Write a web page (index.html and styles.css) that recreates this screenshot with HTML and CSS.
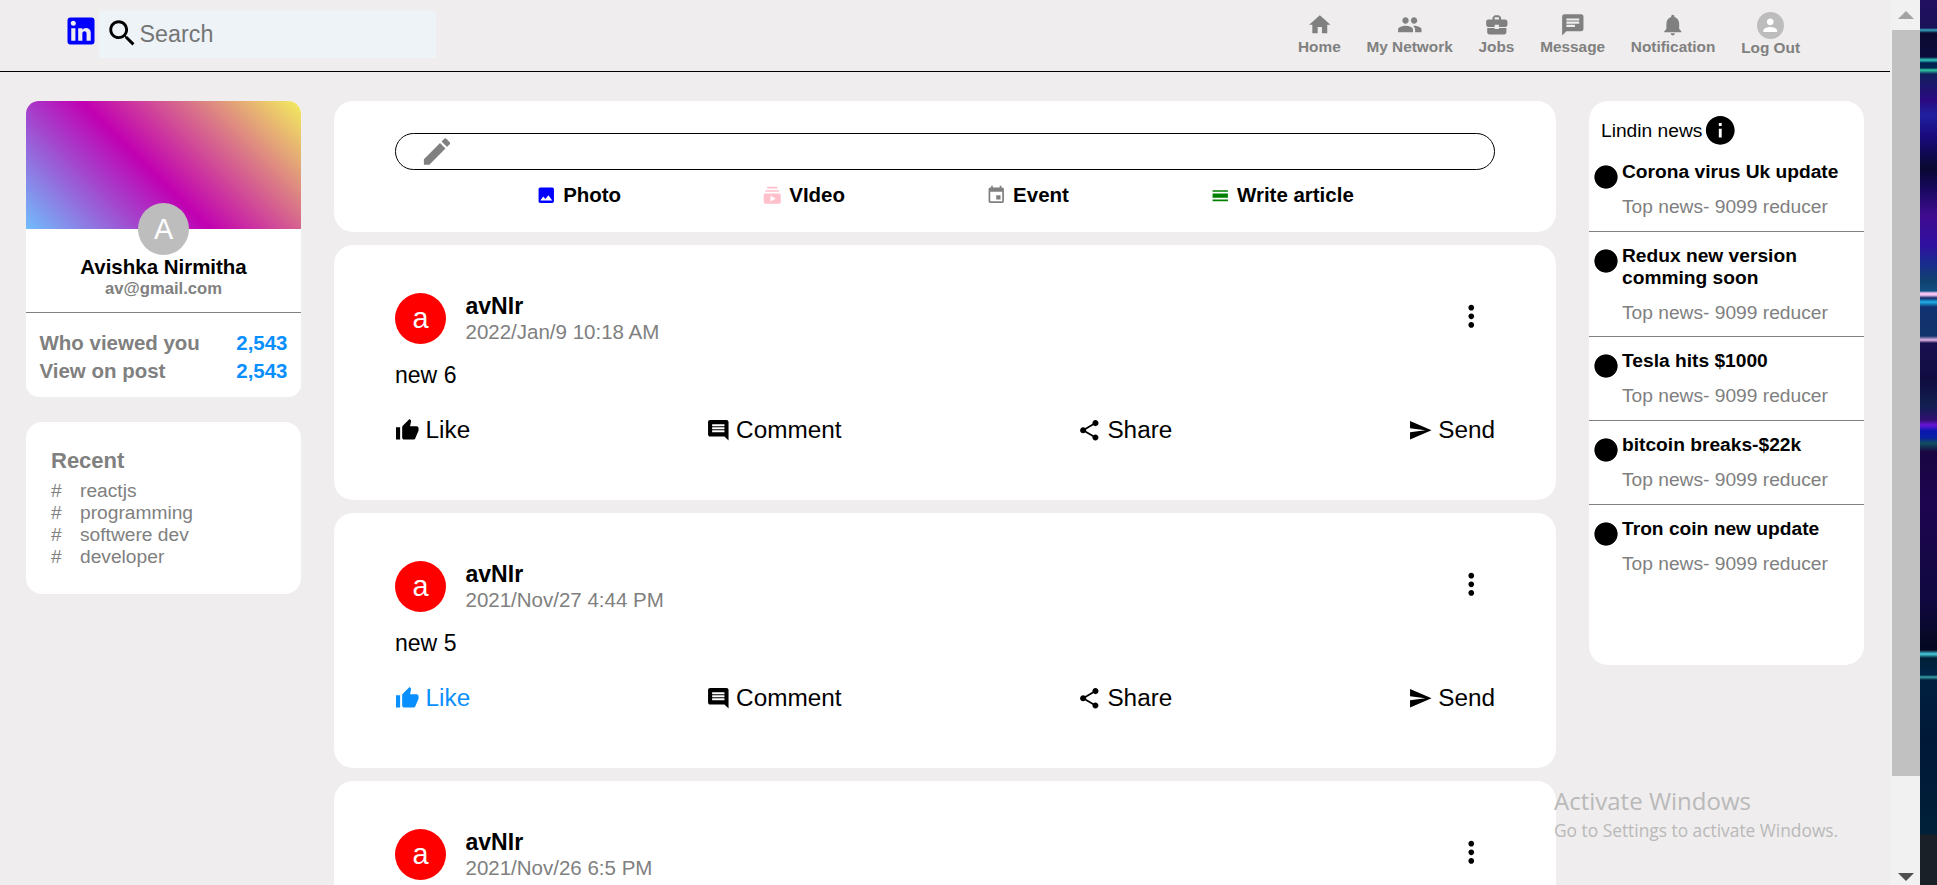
FILE: index.html
```html
<!DOCTYPE html>
<html lang="en">
<head>
<meta charset="utf-8">
<title>Lindin</title>
<link rel="stylesheet" href="styles.css">
</head>
<body>
<svg class="sprite" aria-hidden="true">
  <symbol id="linkedin" viewBox="0 0 24 24"><path d="M19 3a2 2 0 0 1 2 2v14a2 2 0 0 1-2 2H5a2 2 0 0 1-2-2V5a2 2 0 0 1 2-2h14m-.5 15.5v-5.3a3.26 3.26 0 0 0-3.26-3.26c-.85 0-1.84.52-2.32 1.3v-1.11h-2.79v8.37h2.79v-4.93c0-.77.62-1.4 1.39-1.4a1.4 1.4 0 0 1 1.4 1.4v4.93h2.79M6.88 8.56a1.68 1.68 0 0 0 1.68-1.68c0-.93-.75-1.69-1.68-1.69a1.69 1.69 0 0 0-1.69 1.69c0 .93.76 1.68 1.69 1.68m1.39 9.94v-8.37H5.5v8.37h2.77z"/></symbol>
  <symbol id="search" viewBox="0 0 24 24"><path d="M15.5 14h-.79l-.28-.27C15.41 12.59 16 11.11 16 9.5 16 5.91 13.09 3 9.5 3S3 5.91 3 9.5 5.91 16 9.5 16c1.61 0 3.09-.59 4.23-1.57l.27.28v.79l5 4.99L20.49 19l-4.99-5zm-6 0C7.01 14 5 11.99 5 9.5S7.01 5 9.5 5 14 7.01 14 9.5 11.99 14 9.5 14z"/></symbol>
  <symbol id="home" viewBox="0 0 24 24"><path d="M10 20v-6h4v6h5v-8h3L12 3 2 12h3v8z"/></symbol>
  <symbol id="people" viewBox="0 0 24 24"><path d="M16 11c1.66 0 2.99-1.34 2.99-3S17.66 5 16 5c-1.66 0-3 1.34-3 3s1.34 3 3 3zm-8 0c1.66 0 2.99-1.34 2.99-3S9.66 5 8 5C6.34 5 5 6.34 5 8s1.34 3 3 3zm0 2c-2.33 0-7 1.17-7 3.5V19h14v-2.5c0-2.33-4.67-3.5-7-3.5zm8 0c-.29 0-.62.02-.97.05 1.16.84 1.97 1.97 1.97 3.45V19h6v-2.5c0-2.33-4.67-3.5-7-3.5z"/></symbol>
  <symbol id="jobs" viewBox="0 0 24 24"><path d="M10 16v-1H3.01L3 19c0 1.11.89 2 2 2h14c1.11 0 2-.89 2-2v-4h-7v1h-4zm10-9h-4.01V5l-2-2h-4l-2 2v2H4c-1.1 0-2 .9-2 2v3c0 1.11.89 2 2 2h6v-2h4v2h6c1.1 0 2-.9 2-2V9c0-1.1-.9-2-2-2zm-6 0h-4V5h4v2z"/></symbol>
  <symbol id="message" viewBox="0 0 24 24"><path d="M20 2H4c-1.1 0-1.99.9-1.99 2L2 22l4-4h14c1.1 0 2-.9 2-2V4c0-1.1-.9-2-2-2zm-6 12H6v-2h8v2zm4-3H6V9h12v2zm0-3H6V6h12v2z"/></symbol>
  <symbol id="bell" viewBox="0 0 24 24"><path d="M12 22c1.1 0 2-.9 2-2h-4c0 1.1.89 2 2 2zm6-6v-5c0-3.07-1.64-5.64-4.5-6.32V4c0-.83-.67-1.5-1.5-1.5s-1.5.67-1.5 1.5v.68C7.63 5.36 6 7.92 6 11v5l-2 2v1h16v-1l-2-2z"/></symbol>
  <symbol id="person" viewBox="0 0 24 24"><path d="M12 12c2.21 0 4-1.79 4-4s-1.79-4-4-4-4 1.79-4 4 1.79 4 4 4zm0 2c-2.67 0-8 1.34-8 4v2h16v-2c0-2.66-5.33-4-8-4z"/></symbol>
  <symbol id="edit" viewBox="0 0 24 24"><path d="M3 17.25V21h3.75L17.81 9.94l-3.75-3.75L3 17.25zM20.71 7.04c.39-.39.39-1.02 0-1.41l-2.34-2.34a.9959.9959 0 0 0-1.41 0l-1.83 1.83 3.75 3.75 1.83-1.83z"/></symbol>
  <symbol id="photo" viewBox="0 0 24 24"><path d="M21 19V5c0-1.1-.9-2-2-2H5c-1.1 0-2 .9-2 2v14c0 1.1.9 2 2 2h14c1.1 0 2-.9 2-2zM8.5 13.5l2.5 3.01L14.5 12l4.5 6H5l3.5-4.5z"/></symbol>
  <symbol id="video" viewBox="0 0 24 24"><path d="M20 8H4V6h16v2zm-2-6H6v2h12V2zm4 10v8c0 1.1-.9 2-2 2H4c-1.1 0-2-.9-2-2v-8c0-1.1.9-2 2-2h16c1.1 0 2 .9 2 2zm-6 4l-6-3.27v6.53L16 16z"/></symbol>
  <symbol id="event" viewBox="0 0 24 24"><path d="M17 12h-5v5h5v-5zM16 1v2H8V1H6v2H5c-1.11 0-1.99.9-1.99 2L3 19c0 1.1.89 2 2 2h14c1.1 0 2-.9 2-2V5c0-1.1-.9-2-2-2h-1V1h-2zm3 18H5V8h14v11z"/></symbol>
  <symbol id="article" viewBox="0 0 24 24"><path d="M3 17h18v2H3zM3 10h18v5H3zM3 6h18v2H3z"/></symbol>
  <symbol id="more" viewBox="0 0 24 24"><path d="M12 8c1.1 0 2-.9 2-2s-.9-2-2-2-2 .9-2 2 .9 2 2 2zm0 2c-1.1 0-2 .9-2 2s.9 2 2 2 2-.9 2-2-.9-2-2-2zm0 6c-1.1 0-2 .9-2 2s.9 2 2 2 2-.9 2-2-.9-2-2-2z"/></symbol>
  <symbol id="like" viewBox="0 0 24 24"><path d="M1 21h4V9H1v12zm22-11c0-1.100-.9-2-2-2h-6.310l.95-4.570.03-.32c0-.41-.17-.79-.44-1.060L14.170 1 7.590 7.590C7.220 7.950 7 8.450 7 9v10c0 1.100.9 2 2 2h9c.83 0 1.540-.5 1.840-1.220l3.020-7.050c.09-.23.14-.47.14-.73v-2z"/></symbol>
  <symbol id="comment" viewBox="0 0 24 24"><path d="M21.990 4c0-1.100-.89-2-1.990-2H4c-1.100 0-2 .9-2 2v12c0 1.100.9 2 2 2h14l4 4-.01-18zM18 14H6v-2h12v2zm0-3H6V9h12v2zm0-3H6V6h12v2z"/></symbol>
  <symbol id="share" viewBox="0 0 24 24"><path d="M18 16.080c-.76 0-1.440.3-1.960.77L8.910 12.700c.05-.23.09-.46.09-.7s-.04-.47-.09-.7l7.050-4.110c.54.5 1.250.81 2.040.81 1.660 0 3-1.340 3-3s-1.340-3-3-3-3 1.340-3 3c0 .24.04.47.09.7L8.040 9.810C7.500 9.310 6.790 9 6 9c-1.660 0-3 1.340-3 3s1.340 3 3 3c.79 0 1.500-.31 2.040-.81l7.120 4.160c-.05.21-.08.43-.08.65 0 1.610 1.310 2.920 2.920 2.920s2.920-1.310 2.920-2.920-1.310-2.920-2.920-2.920z"/></symbol>
  <symbol id="send" viewBox="0 0 24 24"><path d="M2.010 21L23 12 2.010 3 2 10l15 2-15 2z"/></symbol>
  <symbol id="info" viewBox="0 0 24 24"><path d="M12 2C6.480 2 2 6.480 2 12s4.480 10 10 10 10-4.480 10-10S17.520 2 12 2zm1 15h-2v-6h2v6zm0-8h-2V7h2v2z"/></symbol>
</svg>

<div class="desktop">
  <div class="page">
    <header class="header">
      <svg class="logo"><use href="#linkedin"/></svg>
      <div class="search">
        <svg class="search-icon"><use href="#search"/></svg>
        <span>Search</span>
      </div>
      <nav class="nav">
        <a class="nav-item"><svg><use href="#home"/></svg>Home</a>
        <a class="nav-item"><svg><use href="#people"/></svg>My Network</a>
        <a class="nav-item"><svg><use href="#jobs"/></svg>Jobs</a>
        <a class="nav-item"><svg><use href="#message"/></svg>Message</a>
        <a class="nav-item"><svg><use href="#bell"/></svg>Notification</a>
        <a class="nav-item"><span class="nav-avatar"><svg><use href="#person"/></svg></span>Log Out</a>
      </nav>
    </header>

    <div class="columns">
      <aside class="side">
        <section class="profile">
          <div class="cover"></div>
          <div class="avatar profile-avatar">A</div>
          <h2 class="profile-name">Avishka Nirmitha</h2>
          <p class="profile-mail">av@gmail.com</p>
          <div class="stats">
            <div class="stat"><span>Who viewed you</span><b>2,543</b></div>
            <div class="stat"><span>View on post</span><b>2,543</b></div>
          </div>
        </section>
        <section class="recent">
          <h3>Recent</h3>
          <p><span>#</span>reactjs</p>
          <p><span>#</span>programming</p>
          <p><span>#</span>softwere dev</p>
          <p><span>#</span>developer</p>
        </section>
      </aside>

      <main class="feed">
        <section class="composer">
          <div class="composer-input"><svg><use href="#edit"/></svg></div>
          <div class="composer-options">
            <div class="option"><svg class="blue"><use href="#photo"/></svg>Photo</div>
            <div class="option"><svg class="pink"><use href="#video"/></svg>VIdeo</div>
            <div class="option"><svg class="gray"><use href="#event"/></svg>Event</div>
            <div class="option"><svg class="green"><use href="#article"/></svg>Write article</div>
          </div>
        </section>

        <article class="post">
          <div class="post-head">
            <div class="avatar red">a</div>
            <div class="post-meta"><h4>avNIr</h4><p>2022/Jan/9 10:18 AM</p></div>
            <svg class="more"><use href="#more"/></svg>
          </div>
          <p class="post-body">new 6</p>
          <div class="actions">
            <div class="action"><svg><use href="#like"/></svg>Like</div>
            <div class="action"><svg><use href="#comment"/></svg>Comment</div>
            <div class="action"><svg><use href="#share"/></svg>Share</div>
            <div class="action"><svg><use href="#send"/></svg>Send</div>
          </div>
        </article>

        <article class="post">
          <div class="post-head">
            <div class="avatar red">a</div>
            <div class="post-meta"><h4>avNIr</h4><p>2021/Nov/27 4:44 PM</p></div>
            <svg class="more"><use href="#more"/></svg>
          </div>
          <p class="post-body">new 5</p>
          <div class="actions">
            <div class="action liked"><svg><use href="#like"/></svg>Like</div>
            <div class="action"><svg><use href="#comment"/></svg>Comment</div>
            <div class="action"><svg><use href="#share"/></svg>Share</div>
            <div class="action"><svg><use href="#send"/></svg>Send</div>
          </div>
        </article>

        <article class="post">
          <div class="post-head">
            <div class="avatar red">a</div>
            <div class="post-meta"><h4>avNIr</h4><p>2021/Nov/26 6:5 PM</p></div>
            <svg class="more"><use href="#more"/></svg>
          </div>
        </article>
      </main>

      <aside class="news">
        <div class="news-head">Lindin news<svg><use href="#info"/></svg></div>
        <div class="news-item"><h4>Corona virus Uk update</h4><p>Top news- 9099 reducer</p></div>
        <div class="news-item"><h4>Redux new version comming soon</h4><p>Top news- 9099 reducer</p></div>
        <div class="news-item"><h4>Tesla hits $1000</h4><p>Top news- 9099 reducer</p></div>
        <div class="news-item"><h4>bitcoin breaks-$22k</h4><p>Top news- 9099 reducer</p></div>
        <div class="news-item"><h4>Tron coin new update</h4><p>Top news- 9099 reducer</p></div>
      </aside>
    </div>
  </div>

  <div class="scrollbar">
    <svg class="arrow up" viewBox="0 0 16 8"><path d="M0 8L8 0l8 8z"/></svg>
    <div class="thumb"></div>
    <svg class="arrow down" viewBox="0 0 16 8"><path d="M0 0h16L8 8z"/></svg>
  </div>
  <div class="wallpaper"></div>

  <div class="watermark">
    <p class="watermark-title">Activate Windows</p>
    <p class="watermark-text">Go to Settings to activate Windows.</p>
  </div>
</div>
</body>
</html>
```

FILE: styles.css
```css
* { box-sizing: border-box; margin: 0; padding: 0; }

body {
  font-family: "Liberation Sans", Arial, sans-serif;
  font-size: 19.2px;
  line-height: 22px;
  color: #000;
  overflow: hidden;
}

svg { display: block; flex: none; fill: currentColor; }
.sprite { display: none; }

.desktop {
  position: relative;
  display: grid;
  grid-template-columns: 1890px 30px 17px;
  height: 885px;
  overflow: hidden;
}

.page { height: 885px; overflow: hidden; background: #efeded; }

/* Header */
.header {
  display: flex;
  align-items: flex-start;
  height: 72px;
  padding: 11px 90px 0 63px;
  border-bottom: 1px solid #000;
}
.logo { width: 36px; height: 36px; margin-top: 2px; color: #00f; }
.search {
  display: flex;
  align-items: center;
  width: 337px;
  height: 47px;
  padding: 0 0 2px 5.5px;
  background: #edf3f7;
  color: #757575;
  font-size: 23.3px;
}
.search-icon { width: 34.56px; height: 34.56px; margin-right: .5px; color: #000; }
.nav { display: flex; gap: 25.8px; margin: 1px 0 0 auto; }
.nav-item {
  display: flex;
  flex-direction: column;
  align-items: center;
  color: gray;
  font-size: 15.36px;
  font-weight: bold;
  line-height: 18px;
}
.nav-item svg { width: 25.6px; height: 25.6px; }
.nav-avatar {
  display: flex;
  align-items: center;
  justify-content: center;
  width: 27px;
  height: 27px;
  border-radius: 50%;
  background: #bdbdbd;
  color: #fff;
}
.nav-avatar svg { width: 20.5px; height: 20.5px; }

/* Columns */
.columns {
  display: grid;
  grid-template-columns: 275px 1222px 275px;
  gap: 33px;
  align-items: start;
  padding: 29px 26px 0;
}

.avatar {
  display: flex;
  align-items: center;
  justify-content: center;
  flex: none;
  width: 51px;
  height: 51px;
  border-radius: 50%;
  background: #bdbdbd;
  color: #fff;
  font-size: 28.8px;
  line-height: 1;
}
.red { background: red; }

/* Profile */
.profile {
  height: 296px;
  border-radius: 12.8px;
  background: #fff;
  overflow: hidden;
}
.cover {
  height: 128px;
  background: linear-gradient(45deg, #71bdfc 0%, #c100b2 45.5%, #f3ee5d 100%);
}
.profile-avatar { height: 52px; margin: -26px auto 0; }
.profile-name { font-size: 20.48px; line-height: 24px; text-align: center; }
.profile-mail {
  padding-bottom: 14px;
  color: gray;
  font-size: 16.64px;
  font-weight: bold;
  line-height: 19px;
  text-align: center;
}
.stats { padding: 16px 13.5px 0; border-top: 1px solid gray; color: gray; font-size: 20.48px; font-weight: bold; }
.stat { display: flex; justify-content: space-between; line-height: 28px; }
.stat b { color: #0a8fff; }

.recent {
  height: 172px;
  margin-top: 25px;
  padding: 26px 25px 0;
  border-radius: 16px;
  background: #fff;
  color: gray;
}
.recent h3 { margin-bottom: 6px; font-size: 22px; line-height: 26px; }
.recent p { display: flex; }
.recent span { width: 29px; }

/* Feed */
.feed { display: grid; gap: 13px; }
.composer { height: 131px; padding: 32px 61px 0; border-radius: 19px; background: #fff; }
.composer-input {
  height: 37px;
  padding-left: 22.5px;
  border: 1px solid #000;
  border-radius: 19px;
  color: gray;
}
.composer-input svg { width: 36px; height: 35px; }
.composer-options { display: flex; justify-content: space-evenly; margin-top: 13px; }
.option {
  display: flex;
  align-items: center;
  gap: 6.4px;
  font-size: 20.48px;
  font-weight: bold;
  line-height: 24px;
}
.option svg { width: 20.5px; height: 20.5px; }
.blue { color: #00f; }
.pink { color: pink; }
.gray { color: gray; }
.green { color: green; }

.post { height: 255px; padding: 48px 61px 0; border-radius: 19px; background: #fff; }
.post-head { display: flex; align-items: flex-start; }
.post-meta { flex: 1; margin-left: 19.5px; }
.post-meta h4 { font-size: 23.04px; line-height: 26px; }
.post-meta p { color: gray; font-size: 20.5px; line-height: 25px; }
.more { width: 34.56px; height: 34.56px; margin: 6px 6px 0 0; }
.post-body { margin-top: 18px; font-size: 23.04px; line-height: 26px; }
.actions { display: flex; justify-content: space-between; margin-top: 28px; }
.action { display: flex; align-items: center; gap: 6px; font-size: 24.32px; line-height: 28px; }
.action svg { width: 24.6px; height: 24.6px; }
.liked { color: #0a8fff; }

/* News */
.news { height: 564px; border-radius: 19px; background: #fff; }
.news-head {
  display: flex;
  align-items: center;
  height: 47px;
  padding: 12px 0 0 12px;
}
.news-head svg { width: 34.56px; height: 34.56px; margin-left: 1px; }
.news-item {
  display: grid;
  gap: 13px;
  padding: 13px 20px 12.7px 33px;
  border-bottom: 1px solid gray;
  background: radial-gradient(circle 12px at 17px 29px, #000 11.2px, transparent 12px);
}
.news-item:last-child { border-bottom: 0; }
.news-item h4 { font-size: 19.2px; }
.news-item p { color: gray; }

/* Scroll bar and desktop edge */
.scrollbar {
  display: flex;
  flex-direction: column;
  align-items: center;
  padding: 11px 0 4px 2px;
  background: #f1f1f1;
}
.arrow { width: 16px; height: 8px; }
.up { color: #a3a3a3; }
.thumb { width: 28px; height: 746px; margin-top: 11px; background: #c1c1c1; }
.down { margin-top: auto; color: #505050; }

.wallpaper {
  background: linear-gradient(
    #221060 0, #1a1258 28px, #35a8c0 30px, #0a0a30 33px, #0c0c3c 57px,
    #30d0c0 60px, #002050 63px, #002850 68px, #30d0a8 70px, #10205c 74px,
    #2a0a80 100px, #2020a0 115px, #1a0a80 135px, #080830 168px, #180860 190px,
    #400c90 215px, #3010a0 245px, #1a2a90 262px, #104070 280px, #105080 291px,
    #f4c4f4 293px, #f4c4f4 295px, #102868 298px, #20b0e8 302px, #103070 307px,
    #12346c 336px, #e8b8e8 340px, #181050 343px, #100c40 380px, #102050 405px,
    #301070 420px, #6a14d8 425px, #0818b0 431px, #0a20a0 438px, #105060 443px,
    #180540 452px, #1e0550 500px, #100840 600px, #040820 650px, #48d0e0 654px,
    #002038 658px, #002448 675px, #38a0a8 677px, #002040 680px, #001838 740px,
    #002038 834px, #1a2028 835px, #1a2028 885px);
}

/* Desktop notice lying over the page */
.watermark {
  position: absolute;
  left: 1554px;
  top: 784px;
  color: #b9b9b9;
  font-family: "Open Sans", "Noto Sans", sans-serif;
  white-space: nowrap;
}
.watermark-title { font-size: 24px; line-height: 34px; }
.watermark-text { font-size: 17.35px; line-height: 25px; }
```
